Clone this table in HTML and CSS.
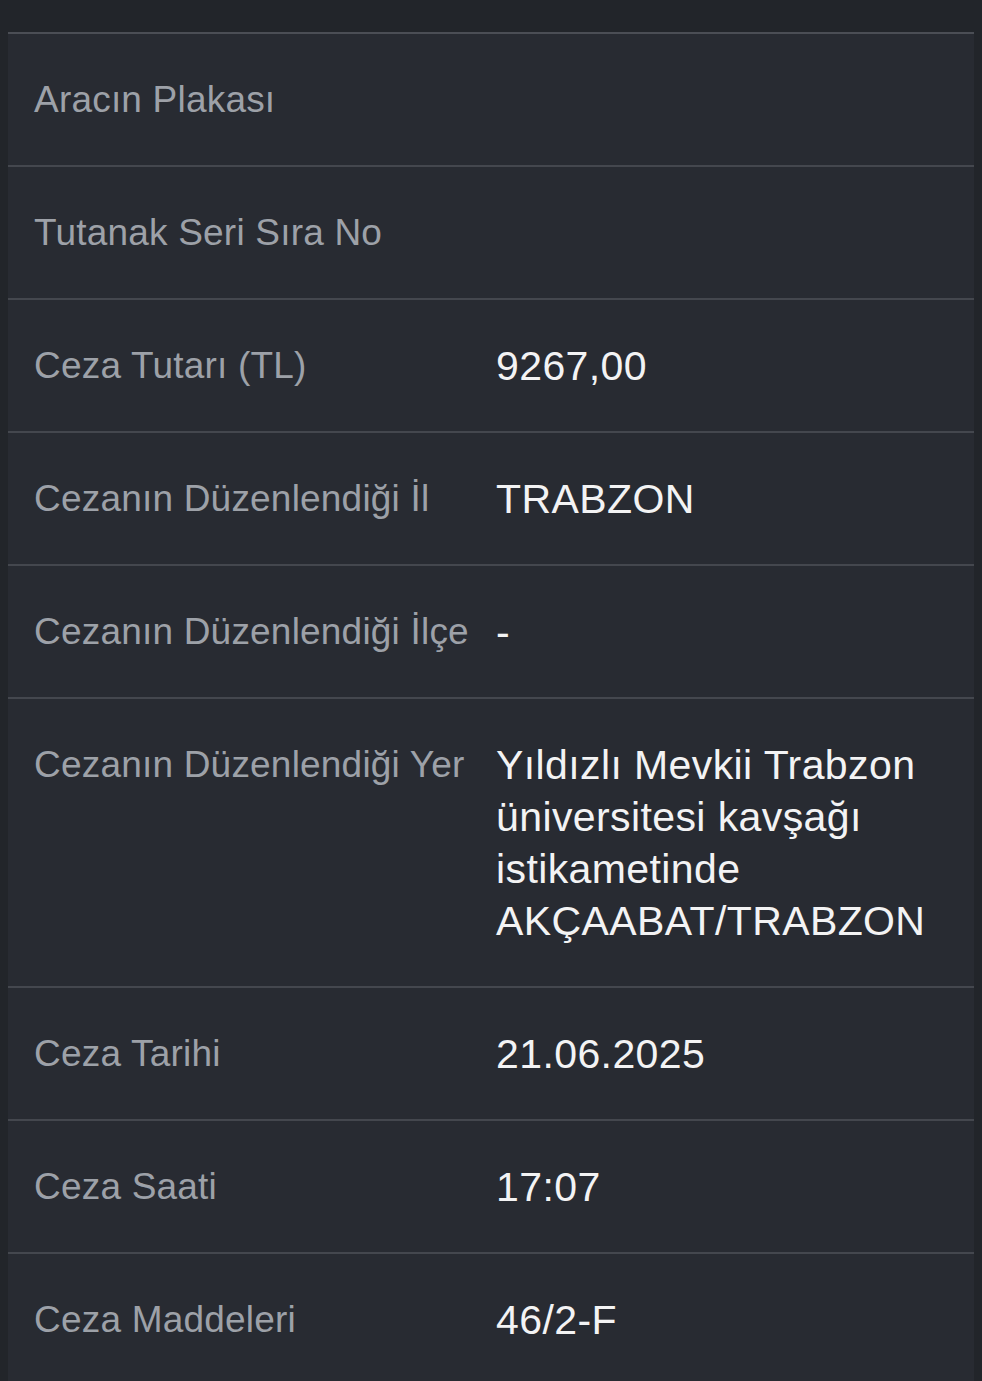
FILE: index.html
```html
<!DOCTYPE html>
<html lang="tr">
<head>
<meta charset="utf-8">
<link rel="stylesheet" href="styles.css">
</head>
<body>
<div class="panel">
  <div class="row"><div class="label">Aracın Plakası</div><div class="value"></div></div>
  <div class="row"><div class="label">Tutanak Seri Sıra No</div><div class="value"></div></div>
  <div class="row"><div class="label">Ceza Tutarı (TL)</div><div class="value">9267,00</div></div>
  <div class="row"><div class="label">Cezanın Düzenlendiği İl</div><div class="value">TRABZON</div></div>
  <div class="row"><div class="label">Cezanın Düzenlendiği İlçe</div><div class="value">-</div></div>
  <div class="row"><div class="label">Cezanın Düzenlendiği Yer</div><div class="value">Yıldızlı Mevkii Trabzon üniversitesi kavşağı istikametinde AKÇAABAT/TRABZON</div></div>
  <div class="row"><div class="label">Ceza Tarihi</div><div class="value">21.06.2025</div></div>
  <div class="row"><div class="label">Ceza Saati</div><div class="value">17:07</div></div>
  <div class="row"><div class="label">Ceza Maddeleri</div><div class="value">46/2-F</div></div>
</div>
</body>
</html>
```
FILE: styles.css
```css
html, body {
  margin: 0;
  padding: 0;
  background: #22252a;
  height: 100%;
}
body {
  padding-top: 32px;
  box-sizing: border-box;
  font-family: "Liberation Sans", Arial, sans-serif;
  overflow: hidden;
}
.panel {
  margin-left: 8px;
  width: 966px;
  min-height: 1400px;
  background: #282b32;
  border-top: 2px solid #4b4e55;
}
.row {
  display: grid;
  grid-template-columns: 462px 1fr;
  align-items: start;
  padding: 40px 30px 39px 26px;
  border-bottom: 2px solid #44474e;
  line-height: 52px;
}
.label {
  font-size: 37px;
  letter-spacing: 0.2px;
  color: #9da1a8;
  white-space: nowrap;
}
.value {
  font-size: 41px;
  letter-spacing: 0.4px;
  color: #f3f3f4;
  min-height: 52px;
}
```
